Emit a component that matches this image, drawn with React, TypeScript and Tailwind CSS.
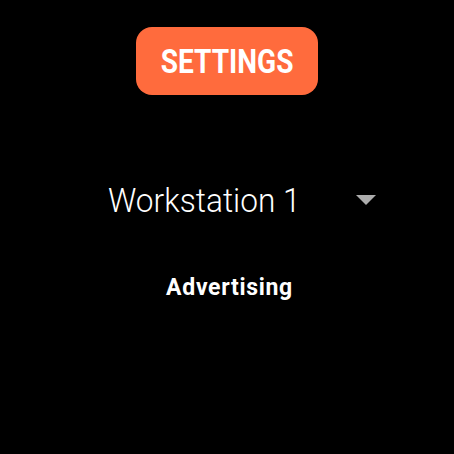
export default function App() {
  return (
    <div
      className="w-[454px] h-[454px] bg-black flex flex-col items-center"
      style={{ fontFamily: 'Roboto, "Liberation Sans", sans-serif' }}
    >
      <button className="mt-[27px] w-[182px] h-[68px] rounded-[16px] bg-[#ff6b3d] text-white flex items-center justify-center">
        <span className="inline-block text-[33px] font-bold leading-none scale-x-[0.85]">SETTINGS</span>
      </button>
      <div className="mt-[88px] w-full flex items-center pl-[108px] pr-[78px]">
        <span className="flex-1">
          <span className="inline-block origin-left scale-x-[0.93] text-white text-[34px] font-light leading-none">
            Workstation 1
          </span>
        </span>
        <svg width="20" height="10" viewBox="0 0 20 10" className="ml-2 -mt-[2px]">
          <path d="M0 0 L20 0 L10 10 Z" fill="#adadad" />
        </svg>
      </div>
      <div className="mt-[57px] ml-[5px] text-white text-[23px] font-bold leading-none tracking-[0.7px]">Advertising</div>
    </div>
  );
}
